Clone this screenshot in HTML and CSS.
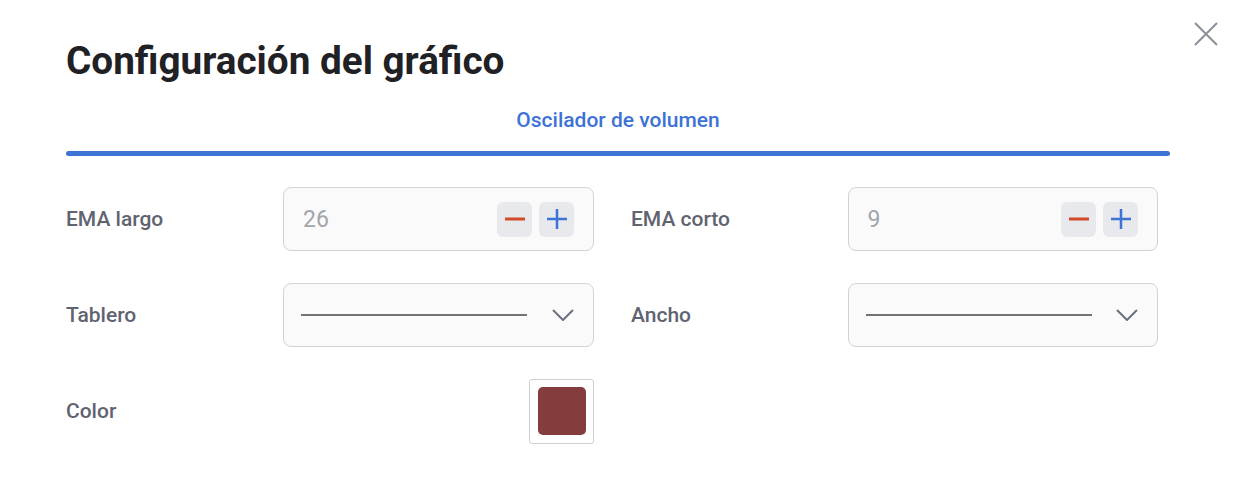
FILE: index.html
```html
<!DOCTYPE html>
<html lang="es">
<head>
<meta charset="utf-8">
<title>Configuración del gráfico</title>
<link rel="stylesheet" href="styles.css">
</head>
<body>
<div class="modal">
  <button class="close" aria-label="Cerrar">
    <svg width="26" height="26" viewBox="0 0 26 26"><path d="M2 2L24 24M24 2L2 24" stroke="#8a8f99" stroke-width="2" fill="none"/></svg>
  </button>
  <h1 class="title">Configuración del gráfico</h1>
  <div class="tabs">
    <div class="tab">Oscilador de volumen</div>
    <div class="tab-bar"></div>
  </div>
  <div class="grid">
    <div class="field">
      <span class="label">EMA largo</span>
      <div class="box">
        <span class="value">26</span>
        <div class="steps">
          <button class="step"><svg width="20" height="20" viewBox="0 0 20 20"><path d="M0 10H20" stroke="#d14a2b" stroke-width="3"/></svg></button>
          <button class="step"><svg width="20" height="20" viewBox="0 0 20 20"><path d="M0 10H20M10 0V20" stroke="#3d72d6" stroke-width="2.5"/></svg></button>
        </div>
      </div>
    </div>
    <div class="field">
      <span class="label">EMA corto</span>
      <div class="box">
        <span class="value">9</span>
        <div class="steps">
          <button class="step"><svg width="20" height="20" viewBox="0 0 20 20"><path d="M0 10H20" stroke="#d14a2b" stroke-width="3"/></svg></button>
          <button class="step"><svg width="20" height="20" viewBox="0 0 20 20"><path d="M0 10H20M10 0V20" stroke="#3d72d6" stroke-width="2.5"/></svg></button>
        </div>
      </div>
    </div>
    <div class="field">
      <span class="label">Tablero</span>
      <div class="box select">
        <span class="line"></span>
        <svg class="chev" width="22" height="12" viewBox="0 0 22 12"><path d="M1 1L11 11L21 1" stroke="#6b7080" stroke-width="2" fill="none"/></svg>
      </div>
    </div>
    <div class="field">
      <span class="label">Ancho</span>
      <div class="box select">
        <span class="line"></span>
        <svg class="chev" width="22" height="12" viewBox="0 0 22 12"><path d="M1 1L11 11L21 1" stroke="#6b7080" stroke-width="2" fill="none"/></svg>
      </div>
    </div>
    <div class="field">
      <span class="label">Color</span>
      <div class="color-cell">
        <div class="swatch"><div class="swatch-fill"></div></div>
      </div>
    </div>
  </div>
</div>
</body>
</html>
```

FILE: styles.css
```css
* { box-sizing: border-box; }
html, body { margin: 0; background: #fff; }
body { font-family: Roboto, "Noto Sans", sans-serif; }
.modal {
  position: relative;
  width: 1242px;
  height: 494px;
  padding: 34px 72px 0 66px;
}
.close {
  position: absolute;
  top: 21px;
  right: 23px;
  padding: 0;
  border: 0;
  background: none;
  width: 26px;
  height: 26px;
}
.close svg { display: block; }
.title {
  margin: 0;
  font-size: 38.7px;
  line-height: 54px;
  font-weight: 700;
  color: #1f2125;
}
.tabs { margin-top: 18px; }
.tab {
  text-align: center;
  font-size: 21px;
  font-weight: 500;
  color: #3d72d6;
  line-height: 28px;
}
.tab-bar {
  margin-top: 17px;
  height: 5px;
  border-radius: 3px;
  background: #3d72d6;
}
.grid {
  margin-top: 31px;
  display: grid;
  grid-template-columns: 528px 527px;
  column-gap: 37px;
  row-gap: 32px;
  width: 1092px;
}
.field {
  display: flex;
  align-items: center;
  height: 64px;
}
.label {
  width: 217px;
  font-size: 21px;
  font-weight: 500;
  color: #5f6470;
}
.box {
  width: 311px;
  height: 64px;
  border: 1px solid #d2d3d8;
  border-radius: 8px;
  background: #fafafb;
  display: flex;
  align-items: center;
  justify-content: space-between;
  padding: 0 19px 0 19px;
}
.value {
  font-size: 23px;
  color: #a2a5ac;
}
.steps { display: flex; gap: 7px; }
.step {
  width: 35px;
  height: 35px;
  border: 0;
  padding: 0;
  border-radius: 6px;
  background: #e8e9ec;
  display: flex;
  align-items: center;
  justify-content: center;
}
.step svg { display: block; }
.select { padding: 0 19px 0 17px; }
.line {
  width: 226px;
  height: 2px;
  background: #737373;
}
.chev { display: block; }
.color-cell {
  width: 311px;
  display: flex;
  justify-content: flex-end;
}
.swatch {
  width: 65px;
  height: 65px;
  border: 1px solid #d0d0d4;
  border-radius: 3px;
  display: flex;
  align-items: center;
  justify-content: center;
  background: #fff;
}
.swatch-fill {
  width: 48px;
  height: 48px;
  border-radius: 5px;
  background: #843c3c;
}
```
